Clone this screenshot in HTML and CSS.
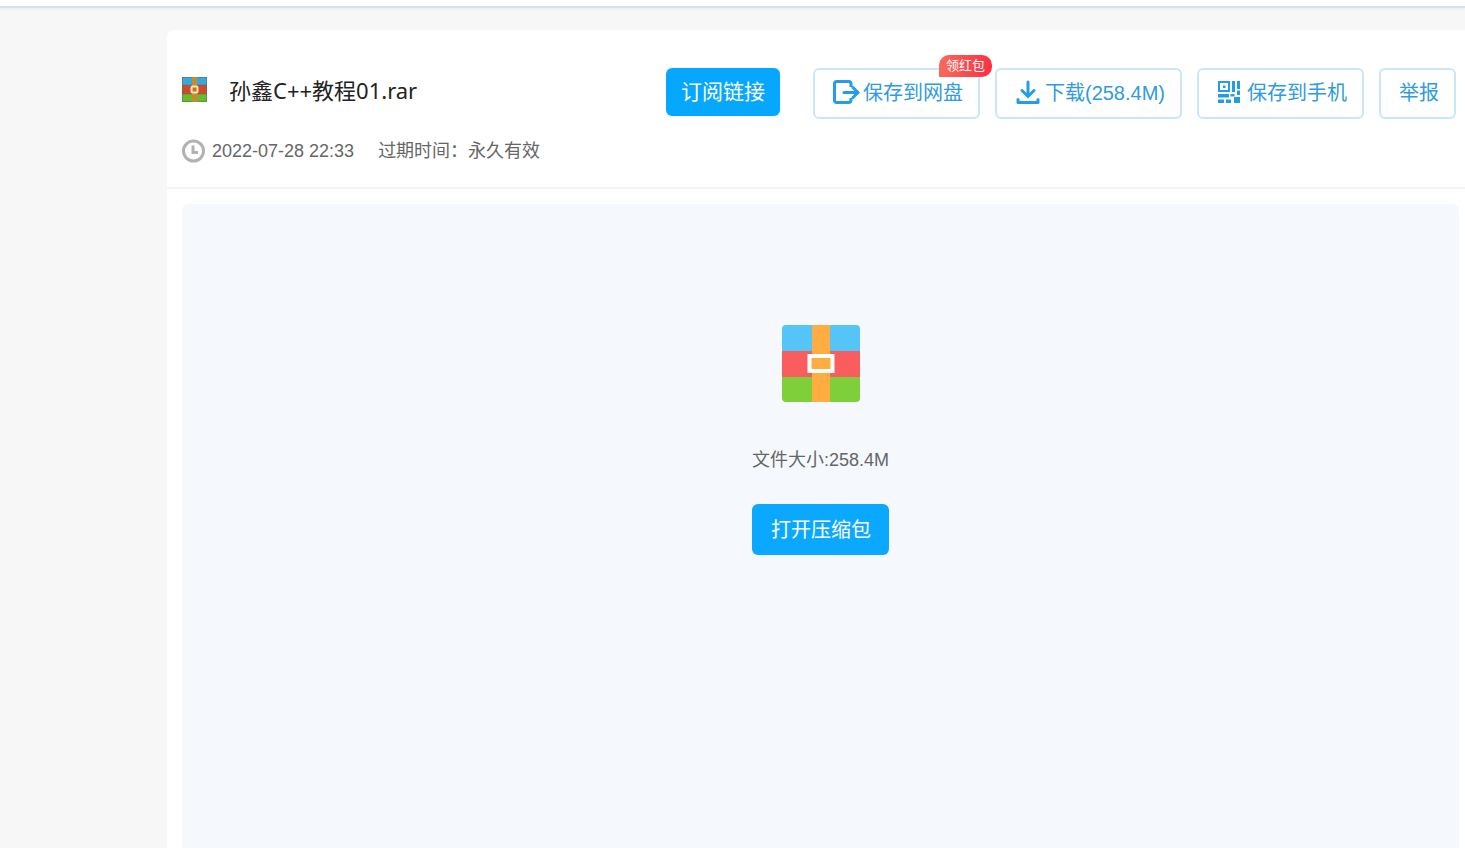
FILE: index.html
```html
<!DOCTYPE html>
<html lang="zh-CN">
<head>
<meta charset="utf-8">
<title>孙鑫C++教程01.rar</title>
<link rel="stylesheet" href="styles.css">
</head>
<body>
<div class="topbar"></div>
<main class="card">
  <header class="file-header">
    <div class="title-row">
      <svg class="file-icon" viewBox="0 0 25 25" aria-hidden="true">
        <path fill="#35a9de" d="M0 0h25v8H0z"/>
        <path fill="#cf4a2c" d="M0 8h25v9H0z"/>
        <path fill="#6cb92d" d="M0 17h25v8H0z"/>
        <path stroke="#4b7550" stroke-opacity=".5" d="M0 8h25M0 17h25M.5 0v25M24.500 0v25M0 .5h25M0 24.500h25"/>
        <path fill="#c98a2c" d="M10 0h5v25h-5z"/>
        <rect x="9.500" y="9.500" width="6" height="6" rx="1" fill="#cf6a2c" stroke="#ffe7ae" stroke-width="2"/>
      </svg>
      <h1 class="file-name">孙鑫C++教程01.rar</h1>
      <div class="actions">
        <button class="subscribe" type="button">订阅链接</button>
        <button class="action" type="button">
          <svg class="action-icon" viewBox="0 0 27 26" fill="none" stroke="#249ce6" stroke-width="3" aria-hidden="true">
            <path d="M18 7V4Q18 1.500 15.500 1.500H4Q1.500 1.500 1.500 4V20Q1.500 22.500 4 22.500H15.500Q18 22.500 18 20V18"/>
            <path stroke-linecap="round" d="M11 12.500h14M20 7.500l5 5-5 5"/>
          </svg>
          <span>保存到网盘</span>
          <span class="badge">领红包</span>
        </button>
        <button class="action" type="button">
          <svg class="action-icon" viewBox="0 0 27 26" fill="none" stroke="#249ce6" stroke-width="3" aria-hidden="true">
            <path stroke-linecap="round" d="M13 2v14M7 10.500l6 6 6-6"/>
            <path stroke-linejoin="round" stroke-linecap="round" d="M3 19.500v3h20v-3"/>
          </svg>
          <span>下载(258.4M)</span>
        </button>
        <button class="action" type="button">
          <svg class="action-icon" viewBox="0 0 27 26" fill="#249ce6" aria-hidden="true">
            <path fill-rule="evenodd" d="M1 1h12v11H1zM3 3v7h8V3z"/>
            <path d="M6 5.500h2.500V8H6zM15 1h3v11h-3zM20 1h3v8h-3zM20 10.500h3V15h-3zM1 14h11v3.500H1zM13.500 14h4v2.500h-4zM1 19.500h6V23H1zM9 19.500h5V23H9zM17 17h6v6h-6z"/>
          </svg>
          <span>保存到手机</span>
        </button>
        <button class="action" type="button">举报</button>
      </div>
    </div>
    <div class="meta">
      <svg class="clock" viewBox="0 0 24 24" fill="none" stroke="#b2b2b2" stroke-width="3" aria-hidden="true">
        <circle cx="11.500" cy="12" r="10"/>
        <path d="M11 6.500v7h5"/>
      </svg>
      <time datetime="2022-07-28T22:33">2022-07-28 22:33</time>
      <span class="expiry">过期时间：永久有效</span>
    </div>
  </header>
  <section class="preview">
    <svg class="archive" viewBox="0 0 78 78" aria-hidden="true">
      <path fill="#55c5f7" d="M4 0h70q4 0 4 4v22H0V4q0-4 4-4z"/>
      <path fill="#f95d5d" d="M0 26h78v26H0z"/>
      <path fill="#7fcf3b" d="M0 52h78v21q0 4-4 4H4q-4 0-4-4z"/>
      <path fill="#ffad41" d="M30 0h18v77H30z"/>
      <rect x="27.500" y="31" width="23" height="15" fill="#ffad41" stroke="#fff" stroke-width="4"/>
    </svg>
    <p class="file-size">文件大小:258.4M</p>
    <button class="open" type="button">打开压缩包</button>
  </section>
</main>
</body>
</html>
```

FILE: styles.css
```css
* {
  box-sizing: border-box;
}

body {
  margin: 0;
  min-height: 100vh;
  display: flex;
  flex-direction: column;
  background: #f7f7f7;
  color: #666;
  font-family: "Liberation Sans", "Noto Sans CJK SC", sans-serif;
  font-size: 18px;
  line-height: 24px;
}

button {
  font-family: inherit;
  font-size: 20px;
  line-height: 24px;
  border: 0;
  cursor: pointer;
}

.topbar {
  height: 8px;
  background: #fff;
  border-bottom: 2px solid #d6e1e8;
  box-shadow: 0 1px 3px #e6edf1;
}

.card {
  flex: 1;
  display: flex;
  flex-direction: column;
  margin: 22px 0 0 167px;
  background: #fff;
  border-top-left-radius: 8px;
}

.file-header {
  padding: 38px 9px 24px 15px;
  border-bottom: 2px solid #f5f5f5;
}

.title-row {
  display: flex;
  align-items: flex-start;
}

.file-icon {
  width: 25px;
  height: 25px;
  margin-top: 9px;
  flex: none;
}

.file-name {
  flex: 1;
  margin: 6px 0 0 22px;
  color: #222;
  font-family: "Noto Sans", "Noto Sans CJK SC", sans-serif;
  font-size: 22px;
  font-weight: 400;
  line-height: 32px;
  white-space: nowrap;
}

.actions {
  display: flex;
  align-items: flex-start;
  gap: 15px;
}

.subscribe {
  height: 48px;
  margin-right: 18px;
  padding: 0 15px;
  border-radius: 6px;
  background: #06a7ff;
  color: #fff;
  font-size: 21px;
}

.action {
  position: relative;
  display: flex;
  align-items: center;
  height: 51px;
  padding: 0 15px 2px 18px;
  border: 2px solid #c9e7f8;
  border-radius: 6px;
  background: #fff;
  color: #2f9be0;
  white-space: nowrap;
}

.action-icon {
  width: 27px;
  height: 26px;
  margin-right: 3px;
}

.badge {
  position: absolute;
  top: -15px;
  right: -14px;
  padding: 0 7px;
  border-radius: 10px 10px 10px 0;
  background: linear-gradient(90deg, #fb6a5c, #fb3040);
  color: #fff;
  font-size: 13px;
  line-height: 22px;
}

.meta {
  display: flex;
  align-items: center;
  margin-top: 20px;
}

.clock {
  width: 24px;
  height: 24px;
  margin-right: 6px;
}

.expiry {
  margin-left: 24px;
}

.preview {
  flex: 1;
  display: flex;
  flex-direction: column;
  align-items: center;
  margin: 15px 6px 0 15px;
  padding-top: 121px;
  border-radius: 6px 6px 0 0;
  background: #f5f9fe;
}

.archive {
  width: 78px;
  height: 78px;
}

.file-size {
  margin: 45px 0 32px;
}

.open {
  height: 51px;
  padding: 0 18px 0 19px;
  border-radius: 6px;
  background: #0aa9ff;
  color: #fff;
}
```
